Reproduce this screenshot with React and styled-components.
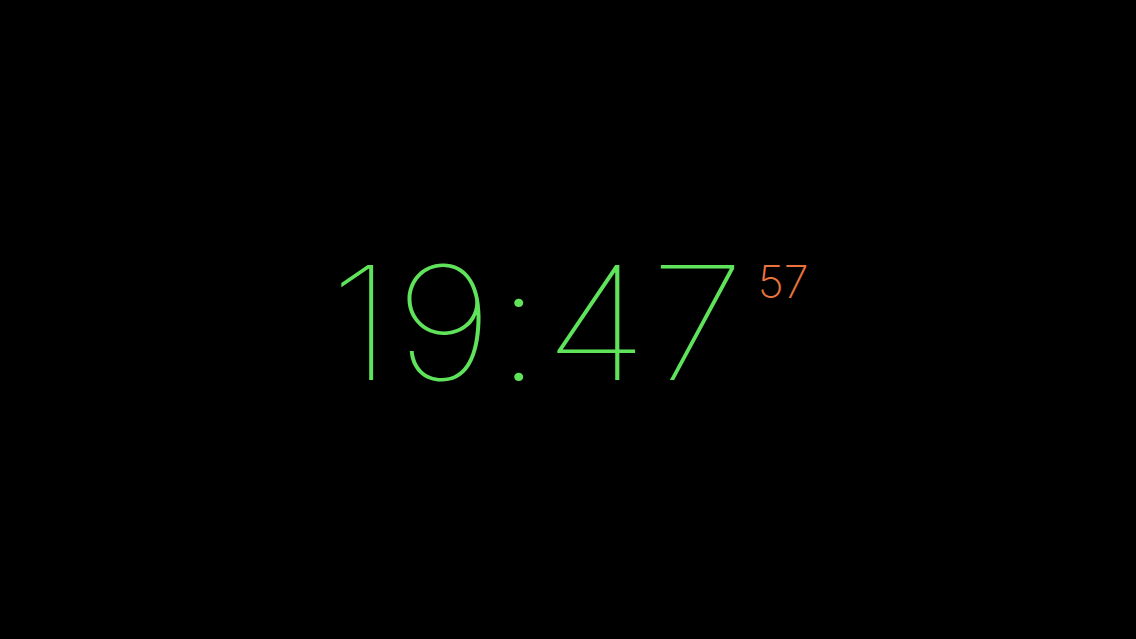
import React from "react";
import styled, { createGlobalStyle } from "styled-components";

const GlobalStyle = createGlobalStyle`
  html, body {
    margin: 0;
    padding: 0;
    background: #000;
  }
`;

const Screen = styled.div`
  width: 100vw;
  height: 100vh;
  display: flex;
  align-items: center;
  justify-content: center;
  background: #000;
  font-family: Inter, "Liberation Sans", sans-serif;
`;

const Clock = styled.div`
  display: flex;
  align-items: flex-start;
  gap: 12px;
  padding: 6px 0 0 2px;
`;

const Time = styled.span`
  display: inline-block;
  font-size: 158px;
  font-weight: 100;
  line-height: 1;
  color: #5fe35b;
  letter-spacing: 2px;
  transform: scaleX(1.1);
  transform-origin: left center;
  margin-right: 36px;
`;

const Seconds = styled.span`
  font-size: 45px;
  font-weight: 200;
  line-height: 1;
  color: #e8733d;
  margin-top: 15px;
`;

export default function App() {
  return (
    <>
      <GlobalStyle />
      <Screen>
        <Clock>
          <Time>19:47</Time>
          <Seconds>57</Seconds>
        </Clock>
      </Screen>
    </>
  );
}
